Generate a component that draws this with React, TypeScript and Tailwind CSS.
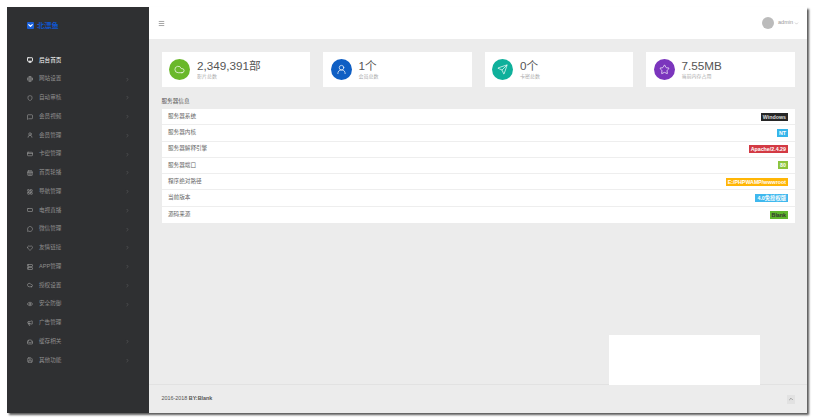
import React from 'react';
import {
  Monitor, Globe, Heart, MessageSquare, UserRound, CreditCard, CalendarDays, LayoutGrid, RectangleHorizontal, MessageCircle,
  Shield, Server, Cloud, Eye, Megaphone, Inbox, Save, ChevronRight, ChevronDown, ChevronUp, Menu, Send, Star,
} from 'lucide-react';

const menu = [
  { icon: Monitor, label: '后台首页', active: true },
  { icon: Globe, label: '网站设置', arrow: true },
  { icon: Shield, label: '自动审核', arrow: true },
  { icon: MessageSquare, label: '会员视频', arrow: true },
  { icon: UserRound, label: '会员管理', arrow: true },
  { icon: CreditCard, label: '卡密管理', arrow: true },
  { icon: CalendarDays, label: '首页轮播', arrow: true },
  { icon: LayoutGrid, label: '导航管理', arrow: true },
  { icon: RectangleHorizontal, label: '电视直播', arrow: true },
  { icon: MessageCircle, label: '微信管理', arrow: true },
  { icon: Heart, label: '友情链接', arrow: true },
  { icon: Server, label: 'APP管理', arrow: true },
  { icon: Cloud, label: '授权设置', arrow: true },
  { icon: Eye, label: '安全防御', arrow: true },
  { icon: Megaphone, label: '广告管理' },
  { icon: Inbox, label: '缓存相关', arrow: true },
  { icon: Save, label: '其他功能', arrow: true },
];

const stats = [
  { icon: Cloud, value: '2,349,391部', label: '影片总数', color: 'bg-[#6ab82a]' },
  { icon: UserRound, value: '1个', label: '会员总数', color: 'bg-[#0f5fc4]' },
  { icon: Send, value: '0个', label: '卡密总数', color: 'bg-[#0fb09b]' },
  { icon: Star, value: '7.55MB', label: '当前内存占用', color: 'bg-[#7b35bd]' },
];

const rows = [
  { label: '服务器系统', value: 'Windows', color: 'bg-[#262626] text-[#dddddd]' },
  { label: '服务器内核', value: 'NT', color: 'bg-[#36b5ea] text-white' },
  { label: '服务器解释引擎', value: 'Apache/2.4.29', color: 'bg-[#d33a44] text-white' },
  { label: '服务器端口', value: '80', color: 'bg-[#8cc43c] text-white' },
  { label: '程序绝对路径', value: 'E:/PHPWAMP/wwwroot', color: 'bg-[#ffb606] text-white' },
  { label: '当前版本', value: '4.0免授权版', color: 'bg-[#3fb8ee] text-white' },
  { label: '源码来源', value: 'Blank', color: 'bg-[#5fb52e] text-[#333333]' },
];

export default function App() {
  return (
    <div className="h-[420px] w-[814px] overflow-hidden bg-white pl-[7px] pt-[7px] font-['Liberation_Sans','Noto_Sans_CJK_SC',sans-serif]">
      <div className="relative flex h-[406px] w-[800px] bg-[#ececec] shadow-[2px_2px_2px_rgba(0,0,0,0.65)]">
        {/* Sidebar */}
        <aside className="flex w-[142px] shrink-0 flex-col bg-[#2f3032]">
          <div className="flex h-[44px] items-center gap-[3px] pb-[7px] pl-[20px]">
            <div className="flex h-[7px] w-[7px] items-center justify-center rounded-[1px] bg-[#1a5fd8]">
              <ChevronDown className="h-[7px] w-[7px] text-white" strokeWidth={4} />
            </div>
            <span className="text-[7.3px] font-bold leading-none text-[#0f55cc]">北漂鱼</span>
          </div>
          <nav>
            {menu.map((item) => (
              <div key={item.label} className="flex h-[18.75px] items-center pl-[20px] pr-[19px]">
                <item.icon
                  className={`h-[6px] w-[6px] shrink-0 ${item.active ? 'text-white' : 'text-[#999999]'}`}
                  strokeWidth={item.active ? 3.5 : 2.5}
                />
                <span className={`ml-[6px] text-[5.6px] leading-none ${item.active ? 'text-white' : 'text-[#8f8f8f]'}`}>
                  {item.label}
                </span>
                {item.arrow && <ChevronRight className="ml-auto h-[5px] w-[5px] text-[#777777]" strokeWidth={2} />}
              </div>
            ))}
          </nav>
        </aside>

        {/* Main */}
        <div className="flex min-w-0 flex-1 flex-col">
          <header className="flex h-[32px] shrink-0 items-center bg-white pl-[9px] pr-[8px]">
            <Menu className="h-[7px] w-[7px] text-[#666666]" strokeWidth={2} />
            <div className="ml-auto flex items-center">
              <div className="h-[12px] w-[12px] rounded-full bg-[#bbbbbb]" />
              <span className="ml-[4px] text-[5.5px] leading-none text-[#999999]">admin</span>
              <ChevronDown className="ml-[1px] h-[5px] w-[5px] text-[#999999]" strokeWidth={2} />
            </div>
          </header>

          <main className="flex-1 px-[12.5px] pt-[12.5px]">
            <div className="grid grid-cols-4 gap-[13px]">
              {stats.map((stat) => (
                <div key={stat.label} className="flex h-[35.5px] items-center bg-white pl-[7.5px]">
                  <div className={`flex h-[21px] w-[21px] items-center justify-center rounded-full ${stat.color}`}>
                    <stat.icon className="h-[11px] w-[11px] text-white" strokeWidth={1.5} />
                  </div>
                  <div className="ml-[7px]">
                    <div className="text-[11.7px] leading-[13px] text-[#555555]">{stat.value}</div>
                    <div className="mt-[1px] text-[5px] leading-[6px] text-[#aaaaaa]">{stat.label}</div>
                  </div>
                </div>
              ))}
            </div>

            <h2 className="mt-[11px] text-[5.6px] font-normal leading-[6px] text-[#555555]">服务器信息</h2>

            <div className="mt-[5px] bg-white">
              {rows.map((row) => (
                <div
                  key={row.label}
                  className="flex h-[16.25px] items-center border-b border-[#eeeeee] pl-[6.5px] pr-[6.5px] last:border-b-0"
                >
                  <span className="text-[5.6px] leading-none text-[#666666]">{row.label}</span>
                  <span className={`ml-auto px-[2px] text-[5.3px] font-bold leading-[8px] ${row.color}`}>{row.value}</span>
                </div>
              ))}
            </div>
          </main>

          <footer className="flex h-[29px] shrink-0 items-center border-t border-[#e2e2e2] pl-[12.5px] pr-[12px]">
            <span className="text-[5.4px] leading-none text-[#555555]">
              2016-2018 <span className="font-bold">BY:Blank</span>
            </span>
            <div className="ml-auto flex h-[9px] w-[8px] items-center justify-center bg-[#e2e2e2]">
              <ChevronUp className="h-[6px] w-[6px] text-[#888888]" strokeWidth={3} />
            </div>
          </footer>
        </div>

        {/* leftover white popup over the footer edge */}
        <div className="absolute left-[602px] top-[328px] h-[50px] w-[151px] bg-white" />
      </div>
    </div>
  );
}
